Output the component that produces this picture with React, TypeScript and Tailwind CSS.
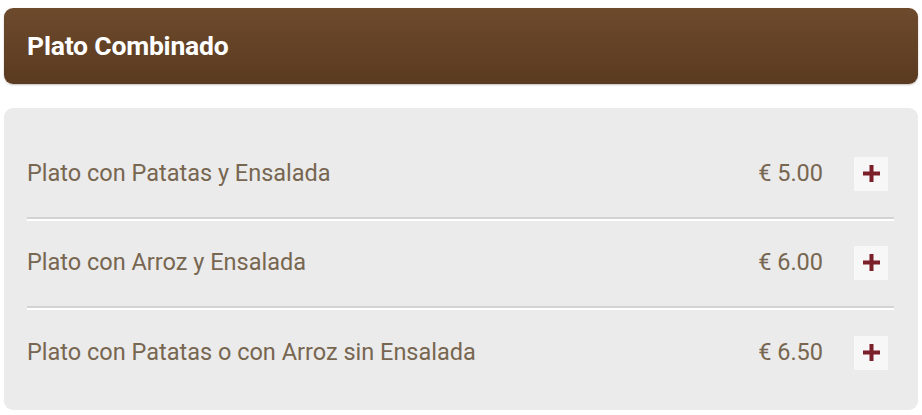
import React from "react";

const items = [
  { name: "Plato con Patatas y Ensalada", price: "€ 5.00" },
  { name: "Plato con Arroz y Ensalada", price: "€ 6.00" },
  { name: "Plato con Patatas o con Arroz sin Ensalada", price: "€ 6.50" },
];

export default function App() {
  return (
    <div className="w-[922px] h-[415px] bg-white px-[4px] pt-[8px] font-['Roboto',sans-serif]">
      <div className="h-[76px] rounded-[9px] bg-gradient-to-b from-[#6d4a2c] to-[#5a3a20] flex items-center px-[23px] shadow-[0_1px_2px_rgba(0,0,0,0.25)]">
        <h2 className="text-white font-bold text-[26.5px] tracking-[-0.2px]">
          Plato Combinado
        </h2>
      </div>
      <div className="mt-[24px] h-[302px] rounded-[9px] bg-[#ebebeb] pl-[23px] pr-[24px] pt-[22px]">
        {items.map((item, i) => (
          <div
            key={item.name}
            className={
              "h-[89px] flex items-center " +
              (i < items.length - 1
                ? "border-b-[2px] border-[#d3d3d3] shadow-[0_2px_0_#ffffff]"
                : "")
            }
          >
            <span className="flex-1 text-[23.5px] text-[#776650]">
              {item.name}
            </span>
            <span className="text-[23.5px] text-[#776650] mr-[31px]">
              {item.price}
            </span>
            <button className="w-[34px] h-[34px] bg-[#f7f7f7] flex items-center justify-center mr-[6px]">
              <svg width="17" height="17" viewBox="0 0 17 17">
                <rect x="6.5" y="0" width="4" height="17" fill="#7b1f28" />
                <rect x="0" y="6.5" width="17" height="4" fill="#7b1f28" />
              </svg>
            </button>
          </div>
        ))}
      </div>
    </div>
  );
}
